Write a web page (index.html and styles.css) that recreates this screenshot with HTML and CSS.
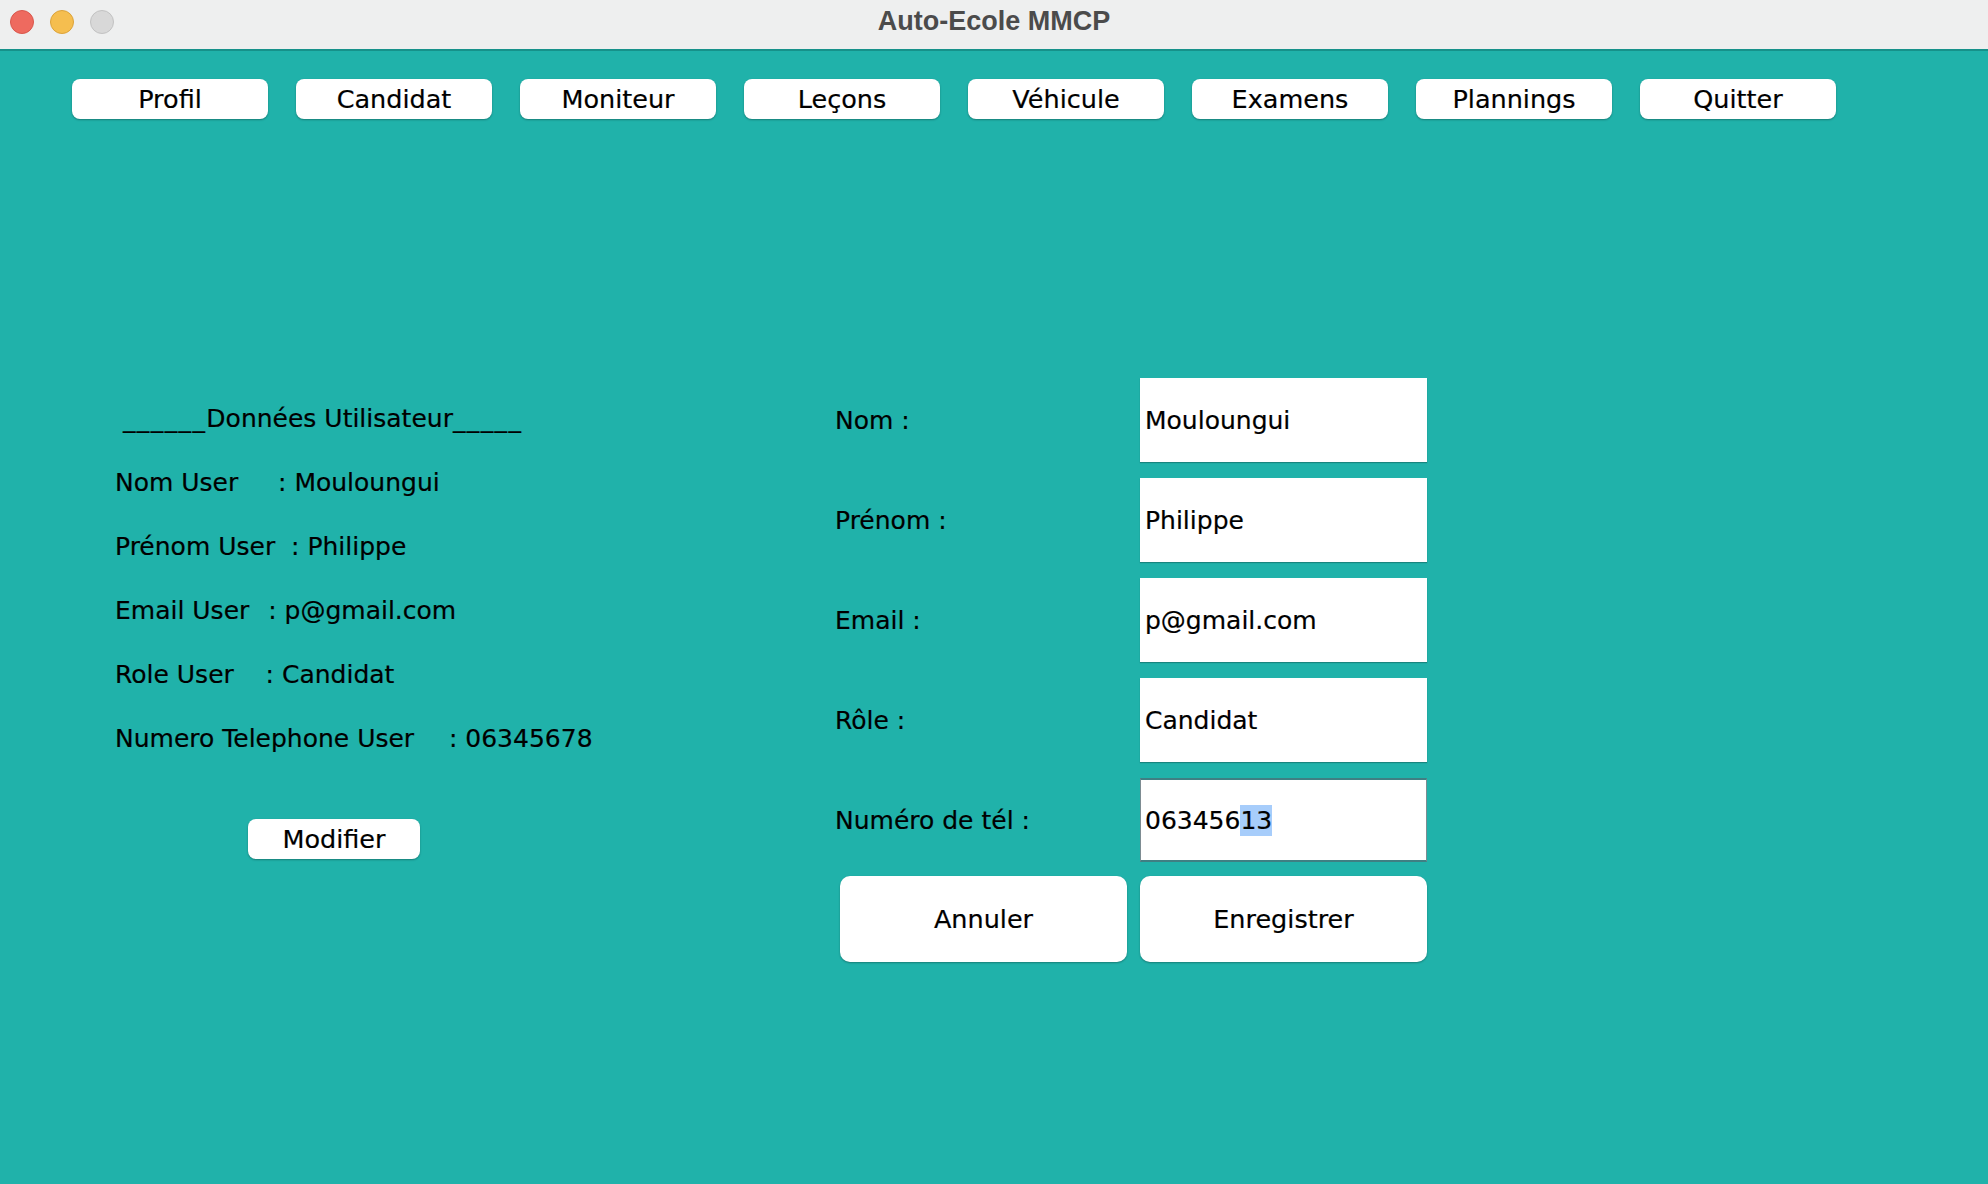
FILE: index.html
```html
<!DOCTYPE html>
<html lang="fr">
<head>
<meta charset="utf-8">
<title>Auto-Ecole MMCP</title>
<link rel="stylesheet" href="styles.css">
</head>
<body>
<div class="window">
  <div class="titlebar">
    <div class="lights">
      <span class="light red"></span>
      <span class="light yellow"></span>
      <span class="light gray"></span>
    </div>
    <div class="title">Auto-Ecole MMCP</div>
  </div>
  <nav class="nav">
    <button class="navbtn">Profil</button>
    <button class="navbtn">Candidat</button>
    <button class="navbtn">Moniteur</button>
    <button class="navbtn">Leçons</button>
    <button class="navbtn">Véhicule</button>
    <button class="navbtn">Examens</button>
    <button class="navbtn">Plannings</button>
    <button class="navbtn">Quitter</button>
  </nav>
  <main class="content">
    <section class="userdata">
      <div class="line"> <span class="us">______</span>Données Utilisateur<span class="us">_____</span></div>
      <div class="line">Nom User     : Mouloungui</div>
      <div class="line">Prénom User  : Philippe</div>
      <div class="line">Email User  <span class="nudge">: p@gmail.com</span></div>
      <div class="line">Role User    : Candidat</div>
      <div class="line">Numero Telephone User    <span class="nudge">: 06345678</span></div>
      <div class="modrow"><button class="smallbtn">Modifier</button></div>
    </section>
    <section class="form">
      <div class="grid">
        <div class="label">Nom :</div>
        <div class="field">Mouloungui</div>
        <div class="label">Prénom :</div>
        <div class="field">Philippe</div>
        <div class="label">Email :</div>
        <div class="field">p@gmail.com</div>
        <div class="label">Rôle :</div>
        <div class="field">Candidat</div>
        <div class="label">Numéro de tél :</div>
        <div class="field focused">063456<span class="sel">13</span></div>
      </div>
      <div class="actions">
        <button class="bigbtn">Annuler</button>
        <button class="bigbtn">Enregistrer</button>
      </div>
    </section>
  </main>
</div>
</body>
</html>
```
FILE: styles.css
```css
html, body {
  margin: 0;
  padding: 0;
}
body {
  width: 1988px;
  height: 1184px;
  background: #20b2aa;
  font-family: "DejaVu Sans", sans-serif;
  font-size: 25px;
  color: #000;
  overflow: hidden;
  -webkit-text-stroke: 0.2px #000;
}
.window {
  height: 1184px;
}
.titlebar {
  position: relative;
  height: 49px;
  background: #eeefef;
  border-bottom: 2px solid #16918a;
  display: flex;
  align-items: center;
  justify-content: center;
}
.lights {
  position: absolute;
  left: 10px;
  top: 10px;
  display: flex;
  gap: 16px;
}
.light {
  width: 22px;
  height: 22px;
  border-radius: 50%;
  border: 1px solid rgba(0,0,0,0.12);
}
.red { background: #ee6a5f; border-color: #d9574c; }
.yellow { background: #f5be4f; border-color: #dca33a; }
.gray { background: #d8d8d8; border-color: #c2c2c2; }
.title {
  font-family: "Liberation Sans", Arial, sans-serif;
  font-weight: bold;
  font-size: 27px;
  color: #4b4b4b;
  -webkit-text-stroke: 0;
  margin-top: -6px;
}
.nav {
  display: flex;
  gap: 28px;
  padding: 28px 0 0 72px;
}
button {
  font-family: "DejaVu Sans", sans-serif;
  color: #000;
  background: #fff;
  border: none;
  padding: 0;
  cursor: default;
  -webkit-text-stroke: 0.2px #000;
}
.navbtn {
  width: 196px;
  height: 40px;
  border-radius: 8px;
  font-size: 25.5px;
  box-shadow: 0 1px 2px rgba(0,0,0,0.3);
}
.content {
  display: flex;
  align-items: flex-start;
  padding-top: 259px;
}
.userdata {
  width: 720px;
  padding-left: 115px;
  margin-top: 9px;
}
.line {
  white-space: pre;
  line-height: 64px;
  height: 64px;
}
.us {
  letter-spacing: 1.4px;
}
.nudge {
  margin-left: 3px;
}
.modrow {
  margin-top: 48px;
  padding-left: 133px;
}
.smallbtn {
  width: 172px;
  height: 40px;
  border-radius: 8px;
  font-size: 25.5px;
  box-shadow: 0 1px 2px rgba(0,0,0,0.3);
}
.form {
  width: 592px;
}
.grid {
  display: grid;
  grid-template-columns: 305px 287px;
  grid-auto-rows: 84px;
  row-gap: 16px;
  align-items: center;
}
.label {
  line-height: 30px;
  margin-top: 2px;
}
.field {
  height: 84px;
  box-sizing: border-box;
  background: #fff;
  padding-left: 5px;
  display: flex;
  align-items: center;
  box-shadow: 0 1px 1px rgba(0,0,0,0.25);
}
.field.focused {
  border: 1px solid #7d8c92;
  border-top: 2px solid #3f7f83;
  border-bottom: 2px solid #3f7f83;
  padding-left: 4px;
  box-shadow: none;
}
.sel {
  background: #a7cdfb;
  line-height: 31px;
}
.actions {
  display: flex;
  justify-content: flex-end;
  gap: 13px;
  margin-top: 14px;
}
.bigbtn {
  width: 287px;
  height: 86px;
  border-radius: 10px;
  font-size: 25.5px;
  box-shadow: 0 1px 2px rgba(0,0,0,0.3);
}
```
